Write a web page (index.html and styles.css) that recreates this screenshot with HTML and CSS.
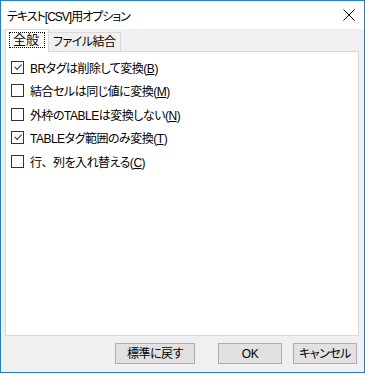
FILE: index.html
```html
<!DOCTYPE html>
<html lang="ja">
<head>
  <meta charset="UTF-8">
  <title>テキスト[CSV]用オプション</title>
  <link rel="stylesheet" href="styles.css">
</head>
<body>
  <div class="window">
    <div class="titlebar">
      <span class="title">テキスト[CSV]用オプション</span>
      <svg class="close" width="12" height="12" viewBox="0 0 12 12">
        <path d="M0.5 0.5 L11.5 11.5 M11.5 0.5 L0.5 11.5" stroke="#000" stroke-width="1" fill="none"/>
      </svg>
    </div>

    <div class="tabs">
      <div class="tab active"><span class="focus">全般</span></div>
      <div class="tab">ファイル結合</div>
    </div>

    <div class="panel">
      <label class="row"><span class="box checked"></span><span>BRタグは削除して変換(<u>B</u>)</span></label>
      <label class="row"><span class="box"></span><span>結合セルは同じ値に変換(<u>M</u>)</span></label>
      <label class="row"><span class="box"></span><span>外枠のTABLEは変換しない(<u>N</u>)</span></label>
      <label class="row"><span class="box checked"></span><span>TABLEタグ範囲のみ変換(<u>T</u>)</span></label>
      <label class="row"><span class="box"></span><span>行<span class="wide">、</span>列を入れ替える(<u>C</u>)</span></label>
    </div>

    <div class="buttons">
      <button class="btn reset">標準に戻す</button>
      <button class="btn ok">OK</button>
      <button class="btn cancel">キャンセル</button>
    </div>
  </div>
</body>
</html>
```

FILE: styles.css
```css
body {
  margin: 0;
  font-family: "Liberation Sans", "Noto Sans CJK JP", sans-serif;
  font-size: 12px;
  font-feature-settings: "palt";
  letter-spacing: -0.5px;
  color: #000;
}
.window {
  width: 365px;
  height: 373px;
  box-sizing: border-box;
  border: 1px solid #1c7fd6;
  background: #f0f0f0;
  display: flex;
  flex-direction: column;
}
.titlebar {
  height: 28px;
  background: #fff;
  display: flex;
  align-items: center;
  justify-content: space-between;
  padding: 0 9px 0 6px;
  flex-shrink: 0;
}
.title {
  font-size: 12px;
  letter-spacing: -1px;
}
.close {
  display: block;
}
.tabs {
  display: flex;
  align-items: flex-end;
  height: 22px;
  margin-left: 4px;
  position: relative;
  z-index: 1;
}
.tab {
  height: 19px;
  line-height: 18px;
  padding: 0 4px;
  border: 1px solid #d9d9d9;
  border-bottom: none;
  background: #f0f0f0;
  box-sizing: border-box;
  font-size: 12px;
  letter-spacing: -0.5px;
}
.tab.active {
  height: 23px;
  background: #fff;
  border-color: #d9d9d9;
  padding: 2px 3px 0 3px;
  margin-bottom: -1px;
  width: 44px;
  font-size: 13px;
  letter-spacing: 0;
}
.focus {
  display: block;
  border: 1px dotted #000;
  line-height: 14px;
  padding: 0 3px;
}
.tab + .tab {
  border-left: none;
}
.panel {
  height: 285px;
  margin: 0 5px 0 4px;
  background: #fff;
  border: 1px solid #d9d9d9;
  padding: 7px 0 0 5px;
  box-sizing: border-box;
  display: flex;
  flex-direction: column;
  gap: 7.6px;
}
.row {
  display: flex;
  align-items: center;
  height: 16px;
  gap: 6px;
}
.row u {
  text-underline-offset: 1px;
}
.wide {
  font-feature-settings: normal;
}
.box {
  width: 11px;
  height: 11px;
  border: 1px solid #333;
  background: #fff;
  position: relative;
  flex-shrink: 0;
}
.box.checked::after {
  content: "";
  position: absolute;
  left: 2px;
  top: 0px;
  width: 6px;
  height: 3px;
  border-left: 1px solid #333;
  border-bottom: 1px solid #333;
  transform: rotate(-45deg) translate(-1px, 2px);
}
.buttons {
  display: flex;
  justify-content: flex-end;
  padding: 7px 7px 0 0;
}
.btn {
  height: 21px;
  font-family: inherit;
  font-size: 12px;
  font-feature-settings: "palt";
  letter-spacing: -0.5px;
  background: #e1e1e1;
  border: 1px solid #adadad;
  padding: 0;
  line-height: 18px;
}
.reset {
  width: 80px;
}
.ok {
  width: 64px;
  margin-left: 23px;
}
.cancel {
  width: 64px;
  margin-left: 11px;
}
```
